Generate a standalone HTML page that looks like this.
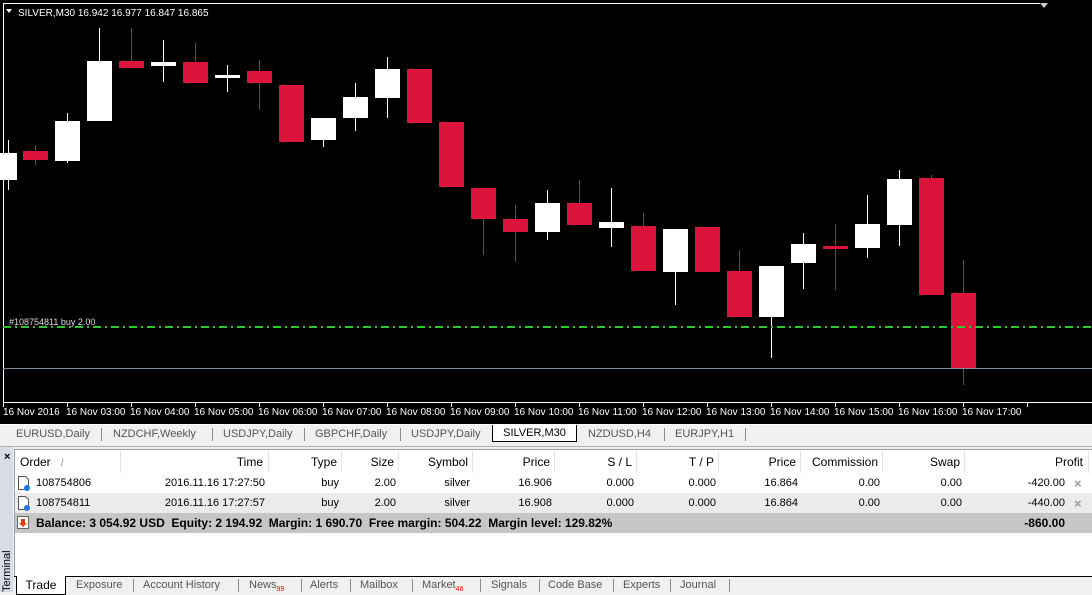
<!DOCTYPE html>
<html><head><style>
body{margin:0;width:1092px;height:592px;overflow:hidden;background:#f0f0f0;font-family:"Liberation Sans",sans-serif;position:relative}
.a{position:absolute;white-space:nowrap}
.t{font-size:11px;color:#000}
.g{font-size:11px;color:#555}
.s{position:absolute;width:1px;background:#888}
</style></head><body>
<svg class="a" style="left:0;top:0" width="1092" height="424">
<rect width="1092" height="424" fill="#000"/>
<path d="M3.5 3 V402.5 H1092" stroke="#fff" fill="none"/>
<path d="M3.5 3.5 H1040" stroke="#fff"/>
<polygon points="1040,3 1048,3 1044,8" fill="#ccc"/>
<polygon points="6,9 12,9 9,13" fill="#fff"/>
<text x="18" y="16" fill="#fff" font-size="10" font-family="Liberation Sans">SILVER,M30  16.942 16.977 16.847 16.865</text>
<g stroke="#fff">
<line x1="8.5" y1="140" x2="8.5" y2="190"/><line x1="67.5" y1="113" x2="67.5" y2="163"/><line x1="99.5" y1="28" x2="99.5" y2="121"/><line x1="163.5" y1="40" x2="163.5" y2="82"/><line x1="227.5" y1="65" x2="227.5" y2="92"/><line x1="323.5" y1="118" x2="323.5" y2="147"/><line x1="355.5" y1="83" x2="355.5" y2="131"/><line x1="387.5" y1="57" x2="387.5" y2="118"/><line x1="547.5" y1="190" x2="547.5" y2="240"/><line x1="611.5" y1="188" x2="611.5" y2="247"/><line x1="675.5" y1="229" x2="675.5" y2="305"/><line x1="771.5" y1="266" x2="771.5" y2="358"/><line x1="803.5" y1="233" x2="803.5" y2="289"/><line x1="867.5" y1="195" x2="867.5" y2="258"/><line x1="899.5" y1="170" x2="899.5" y2="246"/>
</g>
<g fill="#fff">
<rect x="-4" y="153" width="21" height="27"/><rect x="55" y="121" width="25" height="40"/><rect x="87" y="61" width="25" height="60"/><rect x="151" y="62" width="25" height="4"/><rect x="215" y="75" width="25" height="3"/><rect x="311" y="118" width="25" height="22"/><rect x="343" y="97" width="25" height="21"/><rect x="375" y="69" width="25" height="29"/><rect x="535" y="203" width="25" height="29"/><rect x="599" y="222" width="25" height="6"/><rect x="663" y="229" width="25" height="43"/><rect x="759" y="266" width="25" height="51"/><rect x="791" y="244" width="25" height="19"/><rect x="855" y="224" width="25" height="24"/><rect x="887" y="179" width="25" height="46"/>
</g>
<g stroke="#dc143c">
<line x1="35.5" y1="145" x2="35.5" y2="165"/><line x1="131.5" y1="28" x2="131.5" y2="68"/><line x1="195.5" y1="43" x2="195.5" y2="83"/><line x1="259.5" y1="60" x2="259.5" y2="110"/><line x1="483.5" y1="188" x2="483.5" y2="255"/><line x1="515.5" y1="205" x2="515.5" y2="262"/><line x1="579.5" y1="180" x2="579.5" y2="225"/><line x1="643.5" y1="213" x2="643.5" y2="271"/><line x1="739.5" y1="250" x2="739.5" y2="317"/><line x1="835.5" y1="224" x2="835.5" y2="290"/><line x1="931.5" y1="175" x2="931.5" y2="295"/><line x1="963.5" y1="260" x2="963.5" y2="385"/>
</g>
<g fill="#dc143c">
<rect x="23" y="151" width="25" height="9"/><rect x="119" y="61" width="25" height="7"/><rect x="183" y="62" width="25" height="21"/><rect x="247" y="71" width="25" height="12"/><rect x="279" y="85" width="25" height="57"/><rect x="407" y="69" width="25" height="54"/><rect x="439" y="122" width="25" height="65"/><rect x="471" y="188" width="25" height="31"/><rect x="503" y="219" width="25" height="13"/><rect x="567" y="203" width="25" height="22"/><rect x="631" y="226" width="25" height="45"/><rect x="695" y="227" width="25" height="45"/><rect x="727" y="271" width="25" height="46"/><rect x="823" y="246" width="25" height="3"/><rect x="919" y="178" width="25" height="117"/><rect x="951" y="293" width="25" height="75"/>
</g>
<line x1="3" y1="368.5" x2="1092" y2="368.5" stroke="#8090a0"/>
<line x1="3" y1="327" x2="1092" y2="327" stroke="#2ec82e" stroke-width="2" stroke-dasharray="8,4,2,4"/>
<text x="9" y="325" fill="#ddd" font-size="9">#108754811 buy 2.00</text>
<g fill="#fff" font-size="10">
<text x="3" y="415">16 Nov 2016</text>
<text x="66" y="415">16 Nov 03:00</text><text x="130" y="415">16 Nov 04:00</text><text x="194" y="415">16 Nov 05:00</text><text x="258" y="415">16 Nov 06:00</text><text x="322" y="415">16 Nov 07:00</text><text x="386" y="415">16 Nov 08:00</text><text x="450" y="415">16 Nov 09:00</text><text x="514" y="415">16 Nov 10:00</text><text x="578" y="415">16 Nov 11:00</text><text x="642" y="415">16 Nov 12:00</text><text x="706" y="415">16 Nov 13:00</text><text x="770" y="415">16 Nov 14:00</text><text x="834" y="415">16 Nov 15:00</text><text x="898" y="415">16 Nov 16:00</text><text x="962" y="415">16 Nov 17:00</text>
</g>
<g stroke="#fff">
<path d="M3.5 402v5M67.5 402v5M131.5 402v5M195.5 402v5M259.5 402v5M323.5 402v5M387.5 402v5M451.5 402v5M515.5 402v5M579.5 402v5M643.5 402v5M707.5 402v5M771.5 402v5M835.5 402v5M899.5 402v5M963.5 402v5M1027.5 402v5"/>
</g>
</svg>
<div class="a" style="top:424px;left:0;width:1092px;height:20px;background:#f0f0f0;border-top:1px solid #fff"></div>
<div class="a g" style="top:428px;left:16px">EURUSD,Daily</div>
<div class="a g" style="top:428px;left:113px">NZDCHF,Weekly</div>
<div class="a g" style="top:428px;left:223px">USDJPY,Daily</div>
<div class="a g" style="top:428px;left:315px">GBPCHF,Daily</div>
<div class="a g" style="top:428px;left:411px">USDJPY,Daily</div>
<div class="a g" style="top:428px;left:588px">NZDUSD,H4</div>
<div class="a g" style="top:428px;left:675px">EURJPY,H1</div>
<div class="s" style="top:428px;left:101px;height:13px"></div><div class="s" style="top:428px;left:212px;height:13px"></div><div class="s" style="top:428px;left:304px;height:13px"></div><div class="s" style="top:428px;left:400px;height:13px"></div><div class="s" style="top:428px;left:664px;height:13px"></div><div class="s" style="top:428px;left:745px;height:13px"></div>
<div class="a t" style="top:425px;left:492px;width:83px;height:16px;background:#fff;border:1px solid #000;border-top:none;text-align:center;line-height:17px">SILVER,M30</div>
<div class="a" style="top:446px;left:0;width:1092px;height:1px;background:#b0b0b0"></div>
<div class="a" style="top:447px;left:0;width:13px;height:145px;background:#d6dde6"></div>
<div class="a" style="top:451px;left:4px;font-size:11px;font-weight:bold">×</div>
<div class="a" style="top:592px;left:1px;font-size:11px;transform:rotate(-90deg);transform-origin:0 0;width:60px">Terminal</div>
<div class="a" style="top:449px;left:14px;width:1078px;height:127px;background:#fff;border-top:1px solid #a0a0a0;border-left:1px solid #a0a0a0"></div>
<div class="a t" style="top:455px;left:20px;font-size:12px">Order &nbsp;&nbsp;<span style="color:#888;font-size:10px">/</span></div>
<div class="a" style="top:451px;left:120px;width:1px;height:22px;background:#e5e5e5;box-shadow:148px 0 #e5e5e5,221px 0 #e5e5e5,278px 0 #e5e5e5,352px 0 #e5e5e5,434px 0 #e5e5e5,516px 0 #e5e5e5,598px 0 #e5e5e5,680px 0 #e5e5e5,762px 0 #e5e5e5,844px 0 #e5e5e5,968px 0 #e5e5e5"></div>
<div class="a" style="top:493px;left:15px;width:1077px;height:20px;background:#ebebeb"></div>
<div class="a" style="top:513px;left:15px;width:1077px;height:20px;background:#c6c6c6"></div>
<div class="a t" style="top:455px;left:0;width:1084px;height:20px;font-size:12px">
<div class="a" style="right:821px">Time</div><div class="a" style="right:747px">Type</div><div class="a" style="right:690px">Size</div><div class="a" style="right:616px">Symbol</div><div class="a" style="right:534px">Price</div><div class="a" style="right:452px">S / L</div><div class="a" style="right:370px">T / P</div><div class="a" style="right:288px">Price</div><div class="a" style="right:206px">Commission</div><div class="a" style="right:124px">Swap</div><div class="a" style="right:1px">Profit</div>
</div>
<div class="a t" style="top:477px;left:0;width:1066px">
<div class="a" style="left:36px">108754806</div><div class="a" style="right:801px">2016.11.16 17:27:50</div><div class="a" style="right:727px">buy</div><div class="a" style="right:670px">2.00</div><div class="a" style="right:596px">silver</div><div class="a" style="right:514px">16.906</div><div class="a" style="right:432px">0.000</div><div class="a" style="right:350px">0.000</div><div class="a" style="right:268px">16.864</div><div class="a" style="right:186px">0.00</div><div class="a" style="right:104px">0.00</div><div class="a" style="right:1px">-420.00</div>
</div>
<div class="a t" style="top:497px;left:0;width:1066px">
<div class="a" style="left:36px">108754811</div><div class="a" style="right:801px">2016.11.16 17:27:57</div><div class="a" style="right:727px">buy</div><div class="a" style="right:670px">2.00</div><div class="a" style="right:596px">silver</div><div class="a" style="right:514px">16.908</div><div class="a" style="right:432px">0.000</div><div class="a" style="right:350px">0.000</div><div class="a" style="right:268px">16.864</div><div class="a" style="right:186px">0.00</div><div class="a" style="right:104px">0.00</div><div class="a" style="right:1px">-440.00</div>
</div>
<div class="a" style="top:476px;left:1074px;color:#999;font-size:13px;font-weight:bold">×</div>
<div class="a" style="top:496px;left:1074px;color:#999;font-size:13px;font-weight:bold">×</div>
<svg class="a" style="left:17px;top:476px" width="16" height="40"><path d="M1.5 .5h7l3 3v10h-10z" fill="#fff" stroke="#555"/><circle cx="10" cy="12" r="3" fill="#1e7ad8"/><path d="M1.5 20.5h7l3 3v10h-10z" fill="#fff" stroke="#555"/><circle cx="10" cy="32" r="3" fill="#1e7ad8"/></svg>
<svg class="a" style="left:17px;top:516px" width="12" height="13"><rect x=".5" y=".5" width="11" height="12" fill="#fff" stroke="#666"/><path d="M4 3h4v4h2l-4 4-4-4h2z" fill="#e03c10"/></svg>
<div class="a t" style="top:516px;left:36px;font-weight:bold;font-size:12px">Balance: 3 054.92 USD &nbsp;Equity: 2 194.92 &nbsp;Margin: 1 690.70 &nbsp;Free margin: 504.22 &nbsp;Margin level: 129.82%</div>
<div class="a t" style="top:516px;right:27px;font-weight:bold;font-size:12px">-860.00</div>
<div class="a" style="top:576px;left:14px;width:1078px;height:1px;background:#000"></div>
<div class="a t" style="top:576px;left:16px;width:48px;height:18px;background:#fff;border:1px solid #000;border-top:none;text-align:center;line-height:19px;font-size:12px">Trade</div>
<div class="a g" style="top:579px;left:76px">Exposure</div>
<div class="a g" style="top:579px;left:143px">Account History</div>
<div class="a g" style="top:579px;left:249px">News<sub style="color:red;font-size:7px">99</sub></div>
<div class="a g" style="top:579px;left:310px">Alerts</div>
<div class="a g" style="top:579px;left:360px">Mailbox</div>
<div class="a g" style="top:579px;left:422px">Market<sub style="color:red;font-size:7px">46</sub></div>
<div class="a g" style="top:579px;left:491px">Signals</div>
<div class="a g" style="top:579px;left:548px">Code Base</div>
<div class="a g" style="top:579px;left:623px">Experts</div>
<div class="a g" style="top:579px;left:680px">Journal</div>
<div class="s" style="top:579px;left:133px;height:13px"></div><div class="s" style="top:579px;left:238px;height:13px"></div><div class="s" style="top:579px;left:301px;height:13px"></div><div class="s" style="top:579px;left:350px;height:13px"></div><div class="s" style="top:579px;left:412px;height:13px"></div><div class="s" style="top:579px;left:480px;height:13px"></div><div class="s" style="top:579px;left:539px;height:13px"></div><div class="s" style="top:579px;left:613px;height:13px"></div><div class="s" style="top:579px;left:670px;height:13px"></div><div class="s" style="top:579px;left:729px;height:13px"></div>
</body></html>
